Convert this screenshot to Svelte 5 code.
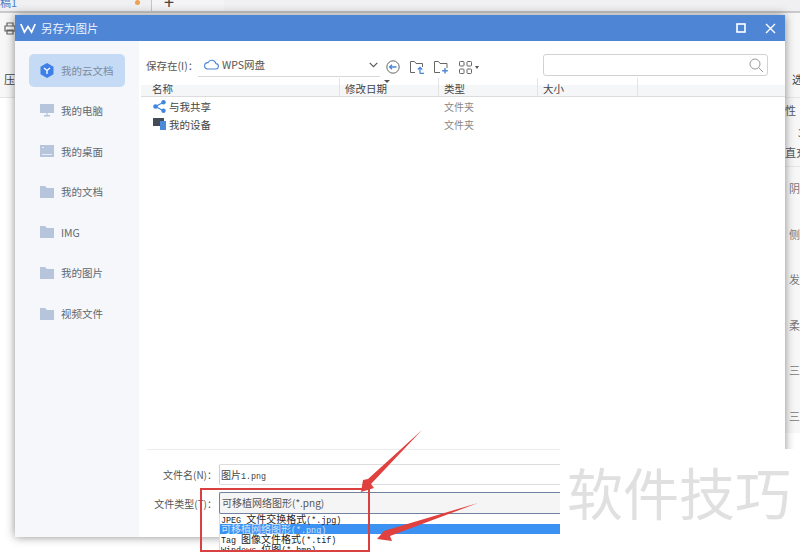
<script>
	const places = [
		{ label: '我的云文档', icon: 'cloud', active: true },
		{ label: '我的电脑', icon: 'pc' },
		{ label: '我的桌面', icon: 'desk' },
		{ label: '我的文档', icon: 'folder' },
		{ label: 'IMG', icon: 'folder' },
		{ label: '我的图片', icon: 'folder' },
		{ label: '视频文件', icon: 'folder' }
	];
	const formats = [
		{ label: 'JPEG 文件交换格式(*.jpg)' },
		{ label: '可移植网络图形(*.png)', active: true },
		{ label: 'Tag 图像文件格式(*.tif)' },
		{ label: 'Windows 位图(*.bmp)' }
	];
	const sideNotes = ['阴', '侧', '发', '柔', '三', '三'];

	// the old dialog font draws latin half as wide as the CJK, so split the runs
	const runs = (s) =>
		s.split(/([\x00-\x7f]+)/).filter(Boolean).map((text) => ({ text, ascii: /^[\x00-\x7f]/.test(text) }));
</script>

<div class="page">
	<div class="tabs">
		<span class="doc">稿1</span>
		<span class="dot"></span>
		<span class="tab"><span class="plus">+</span></span>
	</div>
	<div class="ribbon">
		<div class="ribbon-left">
			<svg width="12" height="13" viewBox="0 0 12 13" fill="none" stroke="#666" stroke-width="1.2"><path d="M3 4V1h6v3M1 4h10v5H1zM3 8h6v4H3z" /></svg>
			<span>压</span>
		</div>
		<span class="ribbon-right">选</span>
	</div>
	<div class="content">
		<div class="canvas"></div>
		<div class="pane">
			<span class="pane-a">性 ·</span>
			<span class="pane-b">3</span>
			<span class="pane-c">直充</span>
			{#each sideNotes as note}
				<span class="note">{note}</span>
			{/each}
		</div>
	</div>

	<div class="dialog">
		<header class="title">
			<svg class="logo" width="16" height="11" viewBox="0 0 16 11" fill="none" stroke="#fff" stroke-width="1.7"><path d="M.8 1l3.6 8.2L8 3.6l3.6 5.6L15.2 1" /></svg>
			<span class="title-text">另存为图片</span>
			<span class="win-btns">
				<svg width="10" height="10" viewBox="0 0 10 10" fill="none" stroke="#fff" stroke-width="1.6"><rect x="1" y="1" width="8" height="8" /></svg>
				<svg width="11" height="11" viewBox="0 0 11 11" fill="none" stroke="#fff" stroke-width="1.4"><path d="M1 1l9 9M10 1l-9 9" /></svg>
			</span>
		</header>
		<div class="body">
			<nav class="side">
				{#each places as p}
					<div class="place" class:active={p.active}>
						<span class="place-icon">
							{#if p.icon === 'cloud'}
								<svg width="14" height="15" viewBox="0 0 14 15"><path d="M7 0l6.5 3.7v7.6L7 15 .5 11.3V3.7z" fill="#3f7fe8" /><path d="M4 5l3 2.5L10 5M7 7.5V11" fill="none" stroke="#fff" stroke-width="1.3" /></svg>
							{:else if p.icon === 'pc'}
								<svg width="14" height="13" viewBox="0 0 14 13"><path d="M0 0h14v9H0zM4 11h6v1.4H4z" fill="#b7c5dc" /><path d="M6 9h2v2H6z" fill="#cfd8e8" /></svg>
							{:else if p.icon === 'desk'}
								<svg width="14" height="12" viewBox="0 0 14 12"><path d="M0 0h14v12H0z" fill="#b7c5dc" /><path d="M2 2h2v1H2zM2 9h10v1H2z" fill="#e8edf5" /></svg>
							{:else}
								<svg width="14" height="12" viewBox="0 0 14 12"><path d="M0 0h5l2 2h7v10H0z" fill="#b7c5dc" /></svg>
							{/if}
						</span>
						<span>{p.label}</span>
					</div>
				{/each}
			</nav>
			<main class="main">
				<div class="toolbar">
					<span class="save-label">保存在(I)：</span>
					<div class="location">
						<svg width="15" height="11" viewBox="0 0 15 11" fill="none" stroke="#4a86d8" stroke-width="1.1"><path d="M3.6 10H11.5a2.7 2.7 0 0 0 .4-5.4A4.2 4.2 0 0 0 4 3.6 3.2 3.2 0 0 0 3.6 10z" /></svg>
						<span class="loc-text">WPS网盘</span>
						<svg class="chev" width="9" height="6" viewBox="0 0 9 6" fill="none" stroke="#555" stroke-width="1.1"><path d="M.7 .8l3.8 3.8L8.3 .8" /></svg>
					</div>
					<div class="tools">
						<svg width="14" height="14" viewBox="0 0 14 14" fill="none"><circle cx="7" cy="7" r="6.2" stroke="#666" /><path d="M3.5 7h7M6 4.8L3.6 7 6 9.2" stroke="#4a86d8" stroke-width="1.3" /></svg>
						<svg width="15" height="13" viewBox="0 0 15 13" fill="none"><path d="M5 11.5H.5V.5h4l1.5 2h6.5V6" stroke="#666" /><path d="M10 12.5V6.5M7.8 8.5L10 6.3l2.2 2.2M10 12.5h4" stroke="#4a86d8" stroke-width="1.3" /></svg>
						<svg width="15" height="13" viewBox="0 0 15 13" fill="none"><path d="M6 11.5H.5V.5h4l1.5 2h7V7" stroke="#666" /><path d="M11 7v5.5M8.2 9.8h5.6" stroke="#4a86d8" stroke-width="1.4" /></svg>
						<span class="grid-tool">
							<svg width="13" height="13" viewBox="0 0 13 13" fill="none" stroke="#666"><rect x=".5" y=".5" width="4.5" height="4.5" rx=".8" /><rect x="8" y=".5" width="4.5" height="4.5" rx=".8" /><rect x=".5" y="8" width="4.5" height="4.5" rx=".8" /><rect x="8" y="8" width="4.5" height="4.5" rx=".8" /></svg>
							<span class="mini-caret"></span>
						</span>
					</div>
					<div class="search">
						<svg width="15" height="15" viewBox="0 0 15 15" fill="none" stroke="#999"><circle cx="6" cy="6" r="5" /><path d="M9.8 9.8l4.2 4.2" /></svg>
					</div>
				</div>
				<div class="columns">
					<span class="col col-name">名称</span>
					<span class="col col-date">修改日期<i class="sort"></i></span>
					<span class="col col-type">类型</span>
					<span class="col col-size">大小</span>
					<span class="col col-rest"></span>
				</div>
				<div class="files">
					<div class="file">
						<svg width="13" height="13" viewBox="0 0 13 13"><circle cx="2.5" cy="6.5" r="2.3" fill="#3f86e0" /><circle cx="10.5" cy="2.3" r="2.2" fill="#3f86e0" /><circle cx="10.5" cy="10.7" r="2.2" fill="#3f86e0" /><path d="M2.5 6.5l8-4.2M2.5 6.5l8 4.2" stroke="#3f86e0" stroke-width="1.2" /></svg>
						<span class="file-name">与我共享</span>
						<span class="file-type">文件夹</span>
					</div>
					<div class="file">
						<svg width="13" height="12" viewBox="0 0 13 12"><path d="M0 0h11v8H0z" fill="#444b55" /><path d="M7 3h6v9H7z" fill="#4a8ad8" /></svg>
						<span class="file-name">我的设备</span>
						<span class="file-type">文件夹</span>
					</div>
				</div>
				<footer class="foot">
					<span class="lab">文件名(N)：</span>
					<div class="input">
						{#each runs('图片1.png') as r}<span class:ascii={r.ascii}>{r.text}</span>{/each}
					</div>
					<span class="lab">文件类型(T)：</span>
					<div class="select">可移植网络图形(*.png)</div>
				</footer>
			</main>
		</div>
	</div>

	<ul class="droplist">
		{#each formats as f}
			<li class:active={f.active}>{#each runs(f.label) as r}<span class:ascii={r.ascii}>{r.text}</span>{/each}</li>
		{/each}
	</ul>

	<div class="mark">软件技巧</div>

	<div class="redbox"></div>
	<svg class="arrows" width="800" height="552" viewBox="0 0 800 552">
		<path d="M422 430L368 479l-5 1-2 12 13-4-3-4z" fill="#e0403e" />
		<path d="M478 503L387 530l-3 1-7 8 15 2-2-5z" fill="#e0403e" />
	</svg>
</div>

<style>
	:global(body) {
		margin: 0;
		background: #fff;
	}

	.page {
		position: relative;
		width: 800px;
		height: 552px;
		overflow: hidden;
		display: flex;
		flex-direction: column;
		font-family: "Noto Sans CJK SC", "Liberation Sans", sans-serif;
		font-size: 11px;
		color: #444;
		background: #fff;
	}

	.tabs {
		height: 11px;
		display: flex;
		align-items: center;
		background: #f0f0f3;
		border-bottom: 2px solid #c9c9cb;
		overflow: hidden;
	}

	.doc {
		color: #4a7fc8;
		width: 135px;
		margin-top: -8px;
	}

	.dot {
		width: 5px;
		height: 5px;
		border-radius: 50%;
		background: #eea24c;
		margin-top: -7px;
	}

	.tab {
		margin-left: 11px;
		width: 60px;
		height: 13px;
		border-left: 1px solid #c4c4c6;
		background: #f4f4f6;
		padding-left: 12px;
		line-height: 0;
	}

	.plus {
		font-size: 18px;
		line-height: 4px;
		color: #444;
	}

	.ribbon {
		height: 84px;
		display: flex;
		justify-content: space-between;
		background: #f7f7f8;
		border-bottom: 1px solid #e6e6e6;
	}

	.ribbon-left {
		display: flex;
		flex-direction: column;
		gap: 36px;
		padding: 9px 0 0 4px;
	}

	.ribbon-right {
		padding: 58px 0 0;
		width: 8px;
		overflow: hidden;
	}

	.content {
		flex: 1;
		display: flex;
	}

	.canvas {
		flex: 1;
	}

	.pane {
		width: 45px;
		height: 335px;
		background: #f7f7f7;
		display: flex;
		flex-direction: column;
		align-items: flex-end;
		color: #555;
		padding-top: 4px;
		box-sizing: border-box;
		overflow: hidden;
	}

	.pane span {
		display: block;
		flex: none;
		width: 15px;
		white-space: nowrap;
		line-height: 16px;
		overflow: hidden;
	}

	.pane-a {
		margin-bottom: 6px;
	}

	.pane-b {
		padding-left: 13px;
		box-sizing: border-box;
	}

	.pane-c {
		margin-top: 4px;
		margin-left: -1px;
		border-bottom: 1px solid #e6e6e6;
		padding-bottom: 6px;
		margin-bottom: 13px;
	}

	.pane .note {
		height: 45.6px;
		color: #777;
		padding-left: 4px;
		box-sizing: border-box;
	}

	.dialog {
		position: absolute;
		left: 15px;
		top: 15px;
		width: 770px;
		height: 522px;
		background: #fff;
		box-shadow: 0 0 9px rgba(0, 0, 0, 0.45);
		display: flex;
		flex-direction: column;
	}

	.title {
		height: 26px;
		background: #4f85d5;
		display: flex;
		align-items: center;
		color: #fff;
		padding: 0 9px 0 5px;
		flex: none;
	}

	.title-text {
		margin-left: 5px;
		font-size: 11.5px;
		color: #eef3fb;
	}

	.win-btns {
		margin-left: auto;
		display: flex;
		align-items: center;
		gap: 19px;
	}

	.body {
		flex: 1;
		display: flex;
		min-height: 0;
	}

	.side {
		width: 124px;
		background: #f5f7fb;
		padding: 13px 14px 0;
		box-sizing: border-box;
		display: flex;
		flex-direction: column;
		gap: 7.6px;
		flex: none;
	}

	.place {
		height: 33px;
		box-sizing: border-box;
		padding: 0 0 1px 11px;
		display: flex;
		align-items: center;
		border-radius: 5px;
		color: #606870;
		font-size: 10.5px;
	}

	.place.active {
		background: #c4daf5;
		color: #7d8a9c;
	}

	.place-icon {
		width: 21px;
		display: flex;
		flex: none;
	}

	.main {
		flex: 1;
		display: flex;
		flex-direction: column;
		min-width: 0;
		padding: 0 2px;
	}

	.toolbar {
		height: 44px;
		flex: none;
		display: flex;
		align-items: flex-start;
		position: relative;
		padding-left: 5px;
	}

	.save-label {
		width: 52px;
		margin-top: 17px;
		line-height: 15px;
		color: #555;
		font-size: 10.5px;
		white-space: nowrap;
	}

	.location {
		width: 176px;
		height: 23px;
		margin-top: 12px;
		padding-left: 6px;
		border-bottom: 1px solid #d8d8d8;
		display: flex;
		align-items: center;
		gap: 3px;
	}

	.loc-text {
		font-size: 10.5px;
		color: #555;
	}

	.chev {
		margin-left: auto;
		margin-right: 2px;
	}

	.tools {
		display: flex;
		align-items: center;
		gap: 9.5px;
		margin: 19px 0 0 6px;
	}

	.grid-tool {
		display: flex;
		align-items: center;
		gap: 3px;
	}

	.mini-caret {
		border: 2px solid transparent;
		border-top: 3px solid #555;
		border-bottom: 0;
	}

	.search {
		position: absolute;
		left: 402px;
		top: 13px;
		width: 225px;
		height: 22px;
		border: 1px solid #d2d2d2;
		border-radius: 3px;
		box-sizing: border-box;
		display: flex;
		align-items: center;
		justify-content: flex-end;
		padding-right: 3px;
	}

	.columns {
		height: 12px;
		box-sizing: border-box;
		flex: none;
		display: grid;
		grid-template-columns: 199px 99px 99px 100px 1fr;
		background: #f5f6f7;
		border-bottom: 1px solid #dcdcdc;
		margin-right: -2px;
	}

	.col {
		line-height: 7px;
		height: 11px;
		padding-left: 5px;
		color: #444;
		font-size: 10.5px;
		position: relative;
		box-sizing: border-box;
		white-space: nowrap;
	}

	/* separators poke up above the header band */
	.col::after {
		content: '';
		position: absolute;
		right: 0;
		top: -7px;
		bottom: 0;
		width: 1px;
		background: #e4e4e4;
	}

	.col-name {
		padding-left: 11px;
	}

	.col-rest::after {
		display: none;
	}

	.sort {
		position: absolute;
		left: 44px;
		top: -5px;
		border: 3px solid transparent;
		border-top: 3px solid #555;
		border-bottom: 0;
	}

	.files {
		flex: 1;
		padding-left: 12px;
	}

	.file {
		height: 18px;
		display: flex;
		align-items: center;
		position: relative;
	}

	.file-name {
		margin-left: 3px;
		color: #444;
		font-size: 10.5px;
	}

	.file-type {
		position: absolute;
		left: 291px;
		color: #888;
		font-size: 10px;
	}

	.foot {
		height: 88px;
		flex: none;
		box-sizing: border-box;
		margin-left: 6px;
		border-top: 1px solid #ececec;
		padding-top: 14px;
		display: grid;
		grid-template-columns: 72px 341px;
		grid-auto-rows: min-content;
		row-gap: 7px;
		align-items: center;
		font-size: 10px;
	}

	.lab {
		justify-self: end;
		padding-right: 2px;
		color: #555;
		white-space: nowrap;
	}

	.input {
		height: 21px;
		line-height: 19px;
		padding-left: 1px;
		border: 1px solid #ddd;
		border-left: 1px solid #ccc;
		border-right: 0;
		box-sizing: border-box;
		border-radius: 2px 0 0 2px;
		color: #444;
	}

	.ascii {
		font-family: "Liberation Mono", monospace;
		font-size: 8.4px;
	}

	.select {
		height: 22px;
		line-height: 19px;
		padding-left: 2px;
		box-sizing: border-box;
		background: #f5f5f5;
		border: solid #70829f;
		border-width: 1px 0 1px 1px;
		border-radius: 2px 0 0 2px;
		color: #555;
		font-size: 10px;
	}

	.droplist {
		position: absolute;
		left: 219px;
		top: 514px;
		width: 341px;
		margin: 0;
		padding: 0;
		list-style: none;
		font-size: 10px;
		background: #fff;
		border-left: 1px solid #ddd;
		box-sizing: border-box;
		color: #222;
	}

	.droplist li {
		height: 10px;
		line-height: 10px;
		padding-left: 1px;
		white-space: pre;
	}

	.droplist li.active {
		background: #3b92f3;
		color: #cfe4fb;
	}

	.mark {
		position: absolute;
		left: 560px;
		top: 449px;
		right: 0;
		bottom: 0;
		background: #fff;
		padding: 4px 0 0 7px;
		font-size: 56px;
		line-height: 76px;
		color: #e0e0e0;
		font-family: "Noto Sans CJK SC", sans-serif;
		white-space: nowrap;
	}

	.redbox {
		position: absolute;
		left: 200px;
		top: 488px;
		width: 170px;
		height: 64px;
		box-sizing: border-box;
		border: 2px solid #d8413f;
	}

	.arrows {
		position: absolute;
		left: 0;
		top: 0;
	}
</style>
